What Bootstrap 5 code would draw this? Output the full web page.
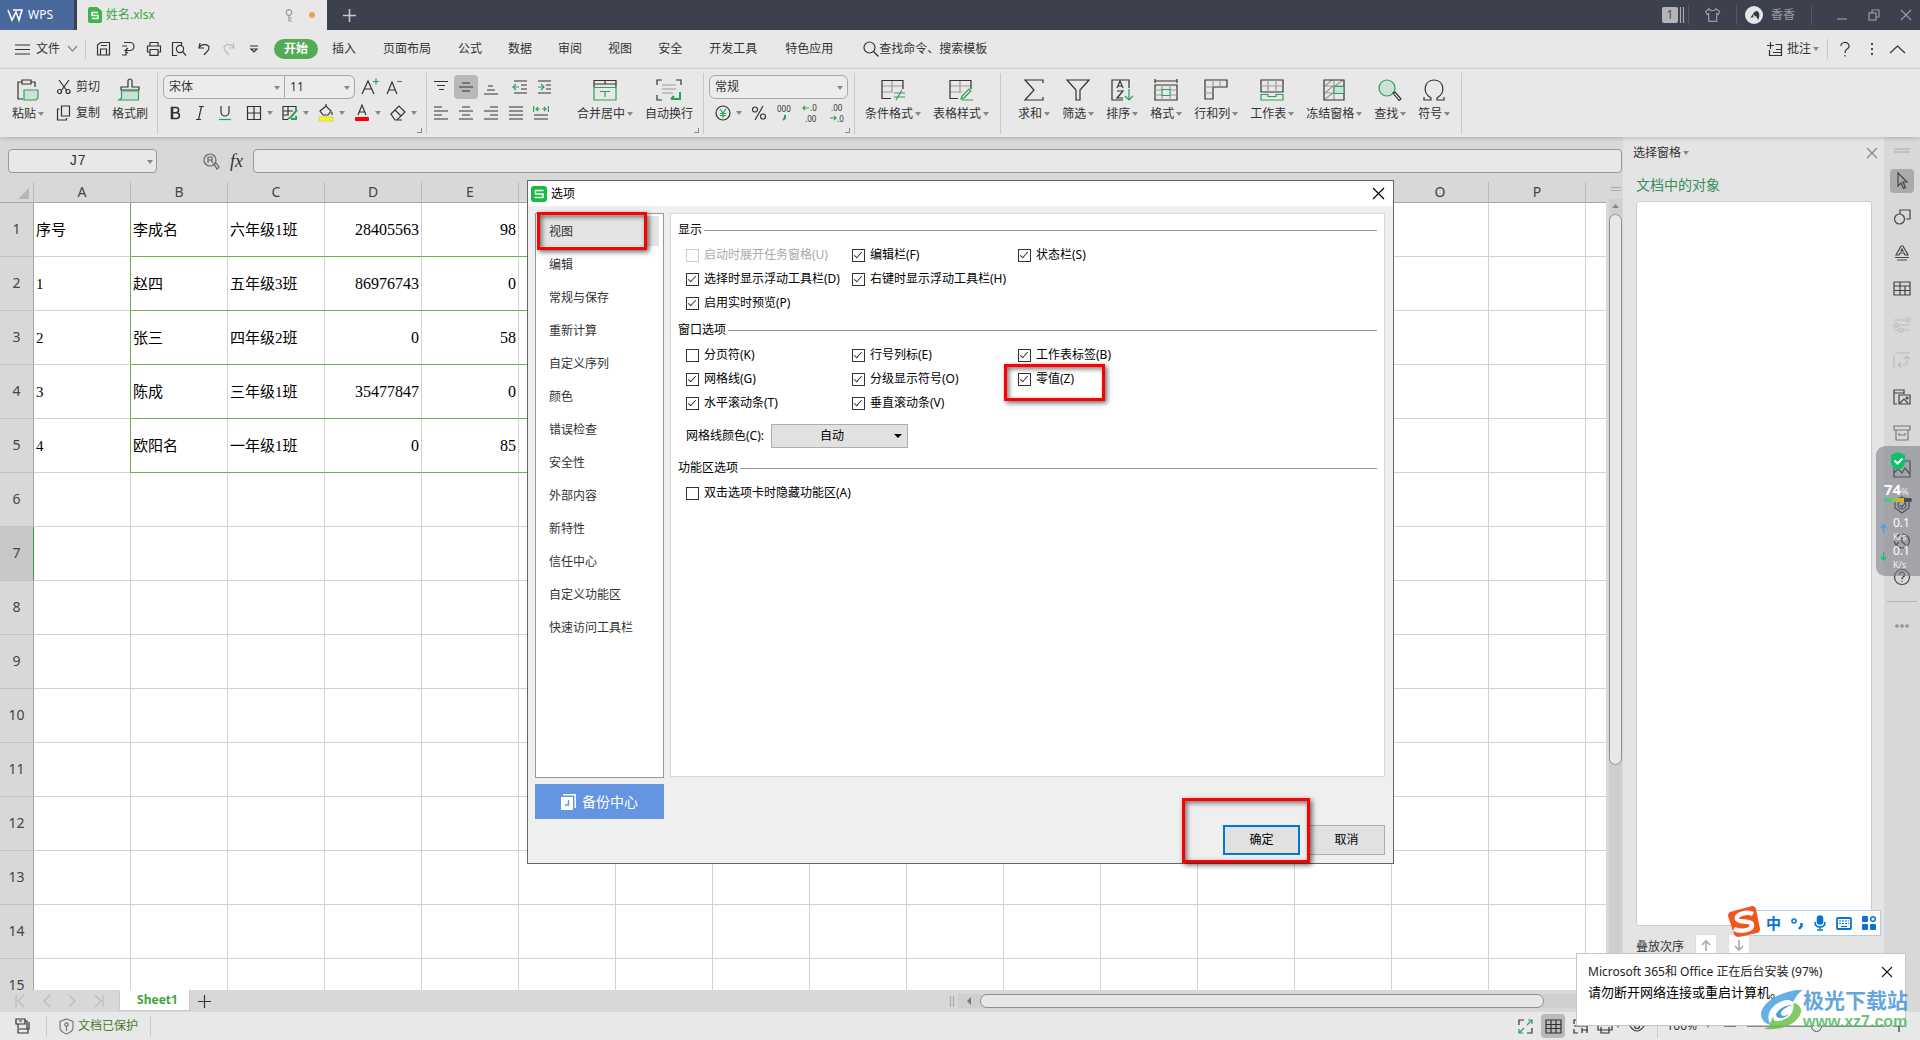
<!DOCTYPE html>
<html lang="zh-CN">
<head>
<meta charset="utf-8">
<meta name="viewport" content="width=device-width, initial-scale=1">
<title>姓名.xlsx - WPS</title>
<link rel="stylesheet" href="https://cdn.jsdelivr.net/npm/bootstrap@5.3.0/dist/css/bootstrap.min.css">
<style>
:root{--ink:#333;--green:#2e9f5b;--bar:#e8e8e8;--mid:#d8d8d8}
body{font-family:"Noto Sans","Noto Sans CJK SC",sans-serif;font-size:12px;line-height:18px;color:var(--ink);background:var(--mid)}
button,input,select{font:inherit;color:inherit}
button{background:none;border:0;padding:0;white-space:nowrap}
a{color:inherit;text-decoration:none}
svg{display:block;flex:none;fill:none;stroke:currentColor;stroke-width:1.2;overflow:visible}
svg.ns{stroke:none} svg.w2{stroke-width:1.6} svg.w3{stroke-width:2.4}
svg .g{stroke:var(--green)} svg .gf{fill:#cfe0d7;stroke:var(--green)} svg .s{stroke:#999}
svg text{stroke:none;fill:currentColor;font-size:8px}
.caret{width:0;height:0;border:3px solid transparent;border-top:4px solid #888;border-bottom:0;flex:none;margin-left:2px}
.g3{gap:3px}
/* title bar */
.titlebar{height:30px;background:#3d404d;color:#999ba4}
.home-btn{width:74px;background:#49689c;color:#fff;gap:5px;padding-left:7px}
.doc-tab{width:250px;margin-left:3px;background:var(--bar);color:#3fa544;padding:0 12px 0 11px}
.tsep{width:1px;height:20px;background:#555966}
.dot{width:6px;height:6px;border-radius:50%;background:#e8a15e}
.count{width:16px;height:16px;background:#b4b5ba;color:#5a4a3a;border-radius:2px;line-height:16px}
.avatar{width:18px;height:18px}
/* menu */
.menubar{height:39px;background:var(--bar);border-bottom:1px solid var(--mid);padding-left:15px}
.file-link{margin:0 8px 0 6px}
.vsep{width:1px;background:#c9c9c9}
.tab-link{padding:0 13px}.tab-wide{padding:0 14px}
.tab-on{background:#54ab55;color:#fff;font-weight:700;border-radius:10px;padding:1px 10px;margin:0 1px 0 12px}
/* ribbon */
.ribbon{height:68px;background:var(--bar);box-shadow:0 1px 4px #0003;z-index:1;position:relative}
.rgroup{position:relative;display:flex;gap:12px}
.rgroup::after{content:"";position:absolute;right:0;top:4px;bottom:3px;width:1px;background:#c9c9c9}
.launch::before{content:"";position:absolute;right:5px;bottom:4px;width:5px;height:5px;border:solid #888;border-width:0 1px 1px 0}
.big{display:flex;flex-direction:column;align-items:center;gap:4px;padding-top:10px}
.two{display:flex;flex-direction:column;gap:2px;padding-top:6px}
.two>div{height:24px;display:flex;align-items:center}
.sq{width:24px;height:24px;display:flex;align-items:center;justify-content:center;border-radius:4px}
.sq.on{background:#b9b9b9}
.pick{position:relative;border:1px solid #a9a9a9;height:24px;background:#ececec}
.pick::after,.grid-color::after{content:"";position:absolute;right:4px;top:10px;border:3px solid transparent;border-top:4px solid #888;border-bottom:0;pointer-events:none}
.pick select,.grid-color select{appearance:none;border:0;background:none;width:100%;height:100%;padding:0 5px;outline:0}
/* sheet */
.fbar{height:45px;padding:12px 1px 9px 8px}
.fbox{height:24px;border:1px solid #999;border-radius:4px;background:var(--bar);outline:0}
.namebox{position:relative;width:149px}
.namebox input{width:100%;padding-right:12px;font:14px "Liberation Mono",monospace;background:none;border:0;outline:0;height:22px}
.namebox .caret{position:absolute;right:3px;top:10px}
.fx{font:italic 18px/20px "Liberation Serif",serif;margin-right:10px}
.sheet{table-layout:fixed;width:1683px;border-collapse:separate;border-spacing:0;background:#fff}
.sheet th{font-weight:400;font-size:14px;color:#444;background:var(--mid);text-align:center;padding:0}
.sheet thead th{height:21px;line-height:20px;border-bottom:1px solid #a5a5a5;border-right:1px solid #bbb}
.sheet tbody th{border-right:1px solid #a5a5a5;border-bottom:1px solid #c2c2c2;padding-bottom:2px}
.sheet tbody .cur{background:#c8c8c8;border-right:1px solid #3d9a50}
.sheet td{height:54px;padding:1px 2px 0;border-right:1px solid #d2d2d2;border-bottom:1px solid #d2d2d2;color:#000;font:15px/22px "Liberation Serif","Noto Sans CJK SC",serif;white-space:nowrap}
.sheet .num{font-size:16px;text-align:right}
.sheet .gb{border-bottom-color:#70ad47}.sheet .gr{border-right-color:#70ad47}
.corner{width:0;height:0;border:solid transparent;border-width:0 0 11px 11px;border-bottom-color:#b5b5b5;margin:3px 4px 0 auto}
.vscroll{width:17px;padding:4px 1px 0 3px}
.vthumb,.hthumb{border:1px solid #8f8f8f;background:var(--bar);border-radius:7px}
.vtrack{background:#cfcfcf}
.vthumb{height:70%;margin-top:5px}
.tabs{height:22px}
.sheet-tab{width:71px;height:21px;background:#fff;border:1px solid #ccc;border-top:0;color:#3fa544;font-weight:700;margin-left:15px;padding-left:6px}
.htrack{flex:0 0 41%;height:14px;background:#cfcfcf;padding:0 79px 0 8px}
.hthumb{margin-left:8px}
/* right pane */
.pane{width:261px;background:#e4e4e4;padding:7px 7px 0 10px}
.pane-head{font-size:14px;line-height:20px;color:#348f5a;margin:13px 0 6px 3px}
.objlist{background:#fff;border:1px solid #ccc;border-radius:3px;margin:0 5px 0 3px}
.order{height:86px;padding:8px 0 0 3px;gap:11px}
.mv{width:22px;height:22px;background:#fff;border:1px solid #ddd;border-radius:2px;display:flex;align-items:center;justify-content:center;color:#aaa}
.strip{width:36px;color:#444;padding-top:11px}
.strip button{width:24px;height:24px;margin-bottom:12px;display:flex;align-items:center;justify-content:center;border-radius:4px}
.strip .on{background:#aaa}
.strip .off{color:#bcbcbc}
.strip hr{width:30px;margin:0 0 22px}
.statusbar{height:28px;background:var(--bar)}
.zoomer{appearance:none;width:138px;height:12px;background:linear-gradient(#888,#888) center/100% 1px no-repeat}
.zoomer::-webkit-slider-thumb{appearance:none;width:11px;height:11px;border:1px solid #555;border-radius:50%;background:var(--bar)}
/* options window */
.dlg{position:absolute;left:527px;top:180px;width:867px;background:#efefef;border:1px solid #666;color:#000;z-index:3}
.dlg-title{height:25px;background:#fff;padding:0 9px 0 3px}
.dlg-body{padding:7px 8px 8px 7px;gap:6px}
.side{width:129px}
.side-list{height:565px;background:#fff;border:1px solid #999;padding:1px 4px 0 1px;color:var(--ink)}
.side-list a{display:block;height:33px;line-height:33px;padding-left:12px}
.side-list .on{background:linear-gradient(#e4e4e4,#e4e4e4) 0 1px/100% 30px no-repeat}
.backup{height:35px;margin-top:6px;background:#6495e1;color:#fff;font-size:14px;gap:6px}
.panel{height:564px;background:#fff;border:1px solid #d8d8d8;padding:7px 7px 0}
.sect{display:flex;align-items:center;gap:2px;font-size:12px;margin:0;float:none;line-height:18px}
.sect::after{content:"";flex:1;height:1px;background:#999}
.opts{display:grid;grid-template-columns:166px 166px 1fr;padding:4px 0 6px 8px}
.opts label{display:flex;align-items:center;gap:5px;height:24px;white-space:nowrap}
.opts .dim{color:#aaa}
.opts input{appearance:none;width:13px;height:13px;border:1px solid #333;margin:0;position:relative;background:#fff}
.opts .dim input{border-color:#ccc}
.opts input:checked::before{content:"";position:absolute;left:3px;top:0;width:4px;height:8px;border:solid #333;border-width:0 1px 1px 0;transform:rotate(42deg)}
.color-row{padding:3px 0 11px 8px}
.color-row label{width:85px}
.grid-color{position:relative;width:137px;height:24px;background:#e1e1e1;border:1px solid #adadad}
.grid-color::after{border-width:4px 4px 0;border-top-color:#000;right:5px;top:9px}
.grid-color select{text-align:center;text-align-last:center;padding-right:20px}
.dlg-foot{gap:8px;margin-top:48px}
.dbtn{width:77px;height:30px;background:#e1e1e1;border:1px solid #adadad}
.dbtn.main{border:2px solid #0078d7}
.hl{position:absolute;border:3px solid #f00;box-shadow:2px 2px 5px #0009,inset 2px 2px 5px #0008;pointer-events:none}
.hl-nav{left:9px;top:31px;width:110px;height:38px}
.hl-zero{left:476px;top:183px;width:101px;height:37px}
.hl-ok{left:654px;top:617px;width:128px;height:65px}
/* floating windows */
.meter{position:absolute;right:0;top:446px;width:44px;height:130px;background:#7d808996;border-radius:9px 0 0 9px;color:#fff;z-index:3;padding-top:6px}
.meter .shield{margin-left:14px}
.meter .load{padding:10px 0 0 8px}
.meter .rate{padding-left:5px;gap:7px;line-height:17px}
.meter .unit{font-size:9px;line-height:11px;color:#eee}
.meter b{font:700 15px/18px "Open Sans",sans-serif}
.up{color:#1fa7ff}.down{color:#0fc06a}
.gauge{width:28px;height:4px;margin:0 0 12px 8px;border-radius:2px;background:linear-gradient(90deg,#2cc1b5,#8fc94a 40%,#f0ab1c 70%,#4a4c55 71%)}
.ime{position:absolute;right:39px;bottom:104px;width:146px;height:26px;background:#fff;border:1px solid #b5cbe8;color:#0873d6;z-index:3;padding:0 4px 0 30px}
.ime b{font-size:15px}
.ime .logo{position:absolute;left:-9px;top:-6px}
.toast-box{position:absolute;right:14px;bottom:14px;width:330px;height:73px;background:#fff;border:1px solid #c5c5c5;color:#222;z-index:3;padding:8px 8px 8px 11px}
.toast-box p{margin:0;line-height:20px}.toast-box .big-line{font-size:13px;color:#000}
.wm{position:absolute;right:12px;bottom:9px;z-index:4;pointer-events:none;opacity:.85}
.wm b{display:block;font-size:21px;line-height:25px;color:#4a97d8}
.wm i{display:block;font:700 16px/18px "Liberation Sans",sans-serif;color:#51b862}
</style>
</head>
<body class="vh-100 d-flex flex-column overflow-hidden position-relative">

<header class="titlebar d-flex align-items-center flex-shrink-0">
  <button class="home-btn d-flex align-items-center h-100"><svg class="w2" width="16" height="12" viewBox="0 0 16 12"><path d="M1 1l4 10 4-8 3 8 3-10H6"/></svg>WPS</button>
  <div class="doc-tab d-flex align-items-center h-100">
    <svg width="14" height="16" viewBox="0 0 14 16"><path d="M2 0h7l5 4v10a2 2 0 0 1-2 2H2a2 2 0 0 1-2-2V2a2 2 0 0 1 2-2z" fill="#3db54a" stroke="none"/><path d="M10 5.500H4v3h6v3H4" stroke="#fff" stroke-width="1.500"/></svg>
    <span class="ms-1">姓名.xlsx</span>
    <svg class="ms-auto me-3" width="8" height="13" viewBox="0 0 8 13" color="#999"><circle cx="4" cy="3.500" r="2.800"/><path d="M4 6v6.500M4 9h3M4 12h3"/></svg><span class="dot"></span>
  </div>
  <button class="ms-3" aria-label="新建"><svg class="w2" width="13" height="13" color="#c6c7cb"><path d="M6.500 0v13M0 6.500h13"/></svg></button>
  <div class="ms-auto d-flex align-items-center pe-2">
    <span class="count text-center">1</span><svg width="6" height="16" color="#aaa"><path d="M2.500 0v16M5.500 0v16"/></svg><span class="tsep ms-1"></span>
    <svg class="mx-3" width="15" height="14" viewBox="0 0 15 14"><path d="M4 .7L.7 3.500l1.500 3 1.500-1v7.800h8V5.500l1.500 1 1.500-3L11 .7 9.500 2.500h-4z"/></svg><span class="tsep"></span>
    <svg class="avatar ns mx-2" viewBox="0 0 18 18"><circle cx="9" cy="9" r="9" fill="#dfe9ec"/><path d="M5 12c2-1 3-7 7-7 3 1 3 6 1 9l-2-4-2 1z" fill="#3b3437"/><path d="M8 8l3 3-3 1z" fill="#e9b5a5"/></svg>
    <span>香香</span><span class="tsep mx-3"></span>
    <button class="px-2 me-1" aria-label="最小化"><svg width="12" height="12"><path d="M1 10h10"/></svg></button>
    <button class="px-2 me-1" aria-label="还原"><svg width="12" height="12"><rect x="1" y="4" width="7" height="7"/><path d="M4 4V1h7v7H8"/></svg></button>
    <button class="ps-2" aria-label="关闭"><svg width="12" height="12"><path d="M1 1l10 10M11 1L1 11"/></svg></button>
  </div>
</header>

<nav class="menubar d-flex align-items-center flex-shrink-0">
  <svg width="15" height="11"><path d="M0 1h15M0 5.500h15M0 10h15"/></svg>
  <a href="#" class="file-link">文件</a>
  <svg width="9" height="6" color="#888"><path d="M0 0l4.500 5L9 0"/></svg>
  <span class="vsep h-50 ms-2"></span>
  <div class="d-flex align-items-center" style="gap:9px;margin-left:10px">
    <button aria-label="保存"><svg width="16" height="16"><path d="M1.500 14V4l3-2.500h9V14zM4.500 14V8h6v6M5 4.500h6"/></svg></button>
    <button aria-label="输出"><svg width="16" height="16"><path d="M3 1.500h6a4 4 0 0 1 0 8H5M7 7L4 9.500 7 12M1 5h5M1 14h4V9"/></svg></button>
    <button aria-label="打印"><svg width="16" height="16"><path d="M4 5V1.500h8V5M4 11H1.500V5h13v6H12M4 8.500h8v5.800H4z"/></svg></button>
    <button aria-label="打印预览"><svg width="16" height="16"><path d="M6 14.500H1.500v-13h9V4"/><circle cx="9" cy="8" r="3.600"/><path d="M11.500 10.500l3.500 4"/></svg></button>
    <button aria-label="撤销"><svg width="16" height="16"><path d="M4 2L3 7h5M3 7c2-5 10-4 10 0 0 3-3 4-5 7"/></svg></button>
    <button aria-label="恢复"><svg width="16" height="16" color="#bbb"><path d="M12 2l1 5H8M13 7C11 2 3 3 3 7c0 3 3 4 5 7"/></svg></button>
    <button aria-label="自定义"><svg width="16" height="16"><path d="M4 5h8M5 8l3 3 3-3z"/></svg></button>
  </div>
  <a href="#" class="tab-on">开始</a>
  <a href="#" class="tab-link">插入</a><a href="#" class="tab-wide">页面布局</a><a href="#" class="tab-link">公式</a><a href="#" class="tab-link">数据</a><a href="#" class="tab-link">审阅</a><a href="#" class="tab-link">视图</a><a href="#" class="tab-link">安全</a><a href="#" class="tab-wide">开发工具</a><a href="#" class="tab-wide">特色应用</a>
  <button class="d-flex align-items-center ms-3"><svg width="16" height="16"><circle cx="6.500" cy="6.500" r="5.500"/><path d="M10.500 10.500l5 5"/></svg>查找命令、搜索模板</button>
  <div class="ms-auto d-flex align-items-center" style="padding-right:15px">
    <button class="d-flex align-items-center me-2"><svg class="me-1" width="16" height="15"><path d="M3.500 0v7M0 3.500h7M8.500 2.500h6v11h-12V8M6 10.500h8M9 7.500h5"/></svg>批注<span class="caret"></span></button>
    <span class="vsep h-100" style="min-height:20px"></span>
    <button class="ms-2 px-1" aria-label="帮助"><svg width="10" height="15"><path d="M1 4a4 3.500 0 1 1 6 3C5.500 8 5 9 5 11M5 13v1.500"/></svg></button>
    <button class="px-3" aria-label="更多"><svg class="ns" width="4" height="14"><path d="M1 1h2v2H1zM1 6h2v2H1zM1 11h2v2H1z" fill="#444"/></svg></button>
    <button aria-label="折叠功能区"><svg width="15" height="9"><path d="M0 8l7.500-7L15 8"/></svg></button>
  </div>
</nav>

<section class="ribbon d-flex flex-shrink-0">
  <div class="rgroup" style="padding:0 10px 0 12px">
    <button class="big"><svg width="24" height="22"><path d="M6 3H2v17h5M15 3h4v5M6 1h9v4H6z"/><path class="gf" d="M8 11h14v8l-2 2H8z"/></svg><span class="d-flex align-items-center">粘贴<span class="caret"></span></span></button>
    <div class="two"><div><button class="d-flex align-items-center gap-1"><svg width="16" height="16"><path d="M3 1l8 11M13 1L5 12"/><circle cx="3.500" cy="12.500" r="2"/><circle cx="12" cy="12.500" r="2"/></svg>剪切</button></div><div><button class="d-flex align-items-center gap-1"><svg width="16" height="16"><path d="M5.500 1h8v10h-8zM3.500 4H1.500v11h9v-2"/></svg>复制</button></div></div>
    <button class="big"><svg width="22" height="22"><path d="M2 11h18V8h-7V2a2 2 0 0 0-4 0v6H2z"/><path class="gf" d="M2.500 12h17v9H0l2.500-2z"/></svg>格式刷</button>
  </div>
  <div class="rgroup launch" style="padding:0 10px 0 5px">
    <div class="two">
      <div><label class="pick rounded-start" style="width:122px"><select aria-label="字体"><option>宋体</option></select></label><label class="pick rounded-end border-start-0" style="width:70px"><select aria-label="字号"><option>11</option></select></label>
        <button class="sq" aria-label="增大字号" style="margin-left:3px"><svg width="18" height="18"><path d="M1 16L7 3l6 13M3.500 11h7"/><path class="g" d="M12 3.500h6M15 .5v6"/></svg></button><button class="sq" aria-label="减小字号"><svg width="18" height="18"><path d="M2 16L7 4l5 12M4 12h6"/><path class="g" d="M12 3.500h5"/></svg></button></div>
      <div style="gap:9px;padding-left:4px">
        <button aria-label="加粗"><svg class="w2" width="16" height="16"><path d="M4.500 2.500H9a2.600 2.600 0 0 1 0 5.200H4.500zM4.500 7.700h5a2.900 2.900 0 0 1 0 5.800h-5zM5.500 2.500v11"/></svg></button>
        <button aria-label="倾斜"><svg width="16" height="16"><path d="M7 1.500h5M4 14.500h5M9.500 1.500l-3 13"/></svg></button>
        <button aria-label="下划线"><svg width="16" height="16"><path d="M4 1v6a4 4 0 0 0 8 0V1"/><path class="g" d="M2 14.500h12"/></svg></button>
        <button class="d-flex align-items-center g3 ms-1" aria-label="边框"><svg width="16" height="16"><path d="M1.500 1.500h13v13h-13zM8 1.500v13M1.500 8h13"/></svg><span class="caret"></span></button>
        <button class="d-flex align-items-center g3" aria-label="绘图边框"><svg width="16" height="16"><path d="M14 5V1.500H1v13h5M1 6h10M1 10h6M6 1.500V10"/><path class="g" stroke-width="2" d="M15 5l-6 7-3 2M9 14h5v-3"/></svg><span class="caret"></span></button>
        <button class="d-flex align-items-center g3" aria-label="填充颜色"><svg width="16" height="18"><path d="M2 7l6-5 5 5-3 4H5zM8 2V0M14 8v3"/><rect x="1" y="13" width="14" height="4" fill="#ff0" stroke="#aaa" stroke-width=".5"/></svg><span class="caret"></span></button>
        <button class="d-flex align-items-center g3" aria-label="字体颜色"><svg width="16" height="18"><path d="M4 11L8 1l4 10M5.500 8h5"/><rect x="1" y="13" width="14" height="4" rx="1" fill="red" stroke="none"/></svg><span class="caret"></span></button>
        <button class="d-flex align-items-center g3" aria-label="清除"><svg width="16" height="16"><path d="M1 9l8-8 6 6-8 8H5zM5 5l6 6M7 15h5"/></svg><span class="caret"></span></button>
      </div>
    </div>
  </div>
  <div class="rgroup launch" style="padding:0 11px 0 2px">
    <div class="two" style="margin-right:8px">
      <div style="gap:1px"><button class="sq" aria-label="顶端对齐"><svg width="16" height="16"><path d="M1 2.500h14M4 6.500h8M6 10.500h5"/></svg></button><button class="sq on" aria-label="垂直居中"><svg width="16" height="16"><path d="M4 4h8M1 8h14M4 12h8"/></svg></button><button class="sq" aria-label="底端对齐"><svg width="16" height="16"><path d="M5 7h5M4 11h8M1 15h14"/></svg></button><button class="sq ms-1" aria-label="减少缩进"><svg width="16" height="16"><path d="M2 2h13M9 6h6M9 10h6M2 14h13"/><path class="g" d="M7 8H1M4 5L1 8l3 3"/></svg></button><button class="sq" aria-label="增加缩进"><svg width="16" height="16"><path d="M1 2h13M9 6h5M9 10h5M1 14h13"/><path class="g" d="M1 8h6M4 5l3 3-3 3"/></svg></button></div>
      <div style="gap:1px"><button class="sq" aria-label="左对齐"><svg width="16" height="16"><path d="M1 2h8M1 6h14M1 10h8M1 14h14"/></svg></button><button class="sq" aria-label="居中"><svg width="16" height="16"><path d="M4 2h8M1 6h14M4 10h8M1 14h14"/></svg></button><button class="sq" aria-label="右对齐"><svg width="16" height="16"><path d="M7 2h8M1 6h14M7 10h8M1 14h14"/></svg></button><button class="sq" aria-label="两端对齐"><svg width="16" height="16"><path d="M1 2h14M1 6h14M1 10h14M1 14h14"/></svg></button><button class="sq" aria-label="分散对齐"><svg width="16" height="16"><path d="M1 10h14M1 14h14"/><path class="g" d="M.6 1v6M15.400 1v6M3 4h4M9 4h4M5 2L3 4l2 2M11 2l2 2-2 2"/></svg></button></div>
    </div>
    <button class="big"><svg width="24" height="22"><path d="M1 8V1.500h22V8M1 5h22M12 1.500V5"/><path class="g" d="M1 8.500h22V21H1zM7 12.500h10M12 12.500V18"/></svg><span class="d-flex align-items-center">合并居中<span class="caret"></span></span></button>
    <button class="big"><svg width="26" height="22"><path d="M6 1H1v5M20 1h5v5M1 16v5h5"/><path class="s" d="M6 6h14M6 10h14M6 14h11"/><path class="g" stroke-width="2" d="M24 13v7h-9M18 17l-3 3"/></svg>自动换行</button>
  </div>
  <div class="rgroup launch" style="padding:0 7px 0 5px">
    <div class="two">
      <div><label class="pick rounded" style="width:139px"><select aria-label="数字格式"><option>常规</option></select></label></div>
      <div style="gap:9px;padding-left:6px">
        <button class="d-flex align-items-center g3" aria-label="货币"><svg width="16" height="16"><circle cx="8" cy="8" r="7"/><path class="g" d="M5 4l3 4 3-4M8 8v5M5 8.500h6M5 10.500h6"/></svg><span class="caret"></span></button>
        <button aria-label="百分比"><svg width="16" height="16"><circle cx="4" cy="4.500" r="2.500"/><circle cx="12" cy="11.500" r="2.500"/><path d="M12 1L4 15"/></svg></button>
        <button aria-label="千位分隔"><svg width="16" height="20"><text x="1" y="9">000</text><path class="g" stroke-width="2" d="M9 12v3l-2 2"/></svg></button>
        <button aria-label="增加小数位"><svg width="18" height="20"><text x="9" y="8">.0</text><text x="4" y="19">.00</text><path class="g" d="M8 5H2M4 3L2 5l2 2"/></svg></button>
        <button aria-label="减少小数位"><svg width="18" height="20"><text x="3" y="8">.00</text><text x="9" y="19">.0</text><path class="g" d="M2 15h6M6 13l2 2-2 2"/></svg></button>
      </div>
    </div>
  </div>
  <div class="rgroup" style="padding:0 12px 0 10px">
    <button class="big"><svg width="24" height="22"><path class="s" d="M1 7h21M1 13h11M11 1v12"/><path d="M10 19.500H1v-18h21V10"/><path class="g" d="M13 14h11M13 18h11M21 11l-6 10"/></svg><span class="d-flex align-items-center">条件格式<span class="caret"></span></span></button>
    <button class="big"><svg width="24" height="22"><path class="s" d="M1 7h21M1 13h12M11 1v12"/><path d="M9 19.500H1v-18h21V10"/><path class="gf" d="M22 12l-7 7-3 1 1-3 7-7zM13 21h11"/></svg><span class="d-flex align-items-center">表格样式<span class="caret"></span></span></button>
  </div>
  <div class="rgroup" style="padding:0 12px 0 17px">
    <button class="big"><svg width="20" height="22"><path d="M19 4V1H1l9 10L1 21h18v-3"/></svg><span class="d-flex align-items-center">求和<span class="caret"></span></span></button>
    <button class="big"><svg width="24" height="22"><path d="M1 1h22l-9 10v10h-4V11z"/></svg><span class="d-flex align-items-center">筛选<span class="caret"></span></span></button>
    <button class="big"><svg width="24" height="22"><path d="M13 21H2V1h17v8M7 9l3-7 3 7M8 7h4M7 12h6l-6 7h6"/><path class="g" d="M19 10v11M15 17l4 4 4-4"/></svg><span class="d-flex align-items-center">排序<span class="caret"></span></span></button>
    <button class="big"><svg width="24" height="22"><path d="M1 0v4M23 0v4M1 2h22M1 6h22v15H1z"/><path class="s" d="M1 11h7M16 11h7M1 16h7M16 16h7M8 6v4M16 6v4M8 17v4M16 17v4"/><path class="g" d="M8 10.500h8v6H8z"/></svg><span class="d-flex align-items-center">格式<span class="caret"></span></span></button>
    <button class="big"><svg width="24" height="22"><path d="M1 1h22v7H9v12H1z"/><path class="s" d="M9 1v7M16 1v7M1 8h8M1 14h8"/></svg><span class="d-flex align-items-center">行和列<span class="caret"></span></span></button>
    <button class="big"><svg width="24" height="22"><path d="M1 13V1h22v12z"/><path class="s" d="M8 1v12M16 1v12M1 7h22"/><path class="g" d="M1 15.500h7v2h8v-2h7V21H1z"/></svg><span class="d-flex align-items-center">工作表<span class="caret"></span></span></button>
    <button class="big"><svg width="22" height="22"><path class="s" d="M1 7h20M1 14h20M11 1v20M2 7l7-6M2 14l8-7M2 20l8-6M12 7l8-6"/><path d="M1 1h20v20H1z"/><path class="gf" d="M11 7.500h10v7H11z"/></svg><span class="d-flex align-items-center">冻结窗格<span class="caret"></span></span></button>
    <button class="big"><svg width="24" height="22"><circle class="gf" cx="9" cy="9" r="8"/><path d="M15 14l2-1 6 7-2 1.500z"/></svg><span class="d-flex align-items-center">查找<span class="caret"></span></span></button>
    <button class="big"><svg width="22" height="22"><path d="M1 18v3h7v-2C-2 13 2 1 11 1s13 12 3 18v2h7v-3"/></svg><span class="d-flex align-items-center">符号<span class="caret"></span></span></button>
  </div>
</section>

<main class="d-flex flex-grow-1" style="min-height:0">
  <div class="d-flex flex-column flex-grow-1" style="min-width:0">
    <div class="fbar d-flex align-items-center">
      <div class="namebox fbox"><input class="text-center" value="J7" aria-label="名称框"><span class="caret"></span></div>
      <svg style="margin:0 10px 0 46px" width="17" height="17" color="#666"><circle cx="7" cy="7" r="6"/><path d="M11 11l2-1 3 4-2 2zM5 10V4h4v3H5M8 7l2 3"/></svg>
      <i class="fx">fx</i>
      <input class="fbox flex-grow-1 px-2" aria-label="编辑栏">
    </div>
    <div class="d-flex flex-grow-1" style="min-height:0">
      <div class="flex-grow-1 overflow-hidden" style="min-width:0"><table class="sheet"><thead></thead><tbody></tbody></table></div>
      <div class="vscroll d-flex flex-column align-items-center flex-shrink-0">
        <svg width="10" height="13" color="#aaa"><path d="M0 1.500h10M0 4.500h10"/></svg>
        <div class="vtrack w-100 flex-grow-1 pt-1"><svg class="mx-auto ns" width="7" height="6"><path d="M0 5l3.500-4L7 5z" fill="#888"/></svg><div class="vthumb"></div></div>
      </div>
    </div>
    <div class="tabs d-flex align-items-center flex-shrink-0">
      <div class="d-flex align-items-center" style="gap:17px;padding-left:15px;color:#bbb">
        <svg width="10" height="12"><path d="M1 0v12M9 0L3 6l6 6"/></svg><svg width="9" height="12"><path d="M8 0L2 6l6 6"/></svg><svg width="9" height="12"><path d="M1 0l6 6-6 6"/></svg><svg width="10" height="12"><path d="M9 0v12M1 0l6 6-6 6"/></svg>
      </div>
      <button class="sheet-tab align-self-start">Sheet1</button>
      <button class="ms-2" aria-label="新建工作表"><svg width="13" height="13"><path d="M6.500 0v13M0 6.500h13"/></svg></button>
      <svg class="ms-auto me-1" width="4" height="11" color="#aaa"><path d="M.5 0v11M3.500 0v11"/></svg>
      <div class="htrack d-flex align-items-center"><svg class="ns" width="6" height="8"><path d="M5 0v8L1 4z" fill="#777"/></svg><div class="hthumb flex-grow-1 h-100"></div></div>
    </div>
  </div>

  <aside class="pane d-flex flex-column flex-shrink-0">
    <div class="d-flex align-items-center"><span>选择窗格</span><span class="caret"></span><button class="ms-auto" aria-label="关闭窗格"><svg width="10" height="10" color="#888"><path d="M0 0l10 10M10 0L0 10"/></svg></button></div>
    <div class="pane-head">文档中的对象</div>
    <div class="objlist flex-grow-1"></div>
    <div class="order d-flex align-items-start"><span class="pt-1">叠放次序</span><button class="mv" aria-label="上移"><svg class="w2" width="10" height="11"><path d="M5 11V1M1 5l4-4 4 4"/></svg></button><button class="mv" aria-label="下移"><svg class="w2" width="10" height="11"><path d="M5 0v10M1 6l4 4 4-4"/></svg></button></div>
  </aside>

  <aside class="strip d-flex flex-column align-items-center flex-shrink-0">
    <svg class="mb-3 flex-shrink-0" width="16" height="5" color="#aaa"><path d="M0 1h16M0 4h16"/></svg>
    <button class="on" aria-label="选择"><svg width="16" height="18"><path d="M4 1l9 9H9l2.500 5.500-2 1L7 11l-3 3z"/></svg></button>
    <button aria-label="形状"><svg width="18" height="18"><path d="M7 6V2h10v9h-4"/><circle cx="6.500" cy="11" r="5"/></svg></button>
    <button aria-label="艺术字"><svg width="18" height="18"><path d="M3 11L8 2h2l5 9h-3l-1-2H7l-1 2zM8 7l1-2 1 2zM2 13.500h14M4 16h10"/></svg></button>
    <button aria-label="表格"><svg width="18" height="16"><path d="M1 1h16v13H1zM1 5h16M1 9.500h16M7 1v13M12 5v9"/></svg></button>
    <button class="off" aria-label="属性"><svg width="18" height="16"><path d="M1 3h12M5 8h12M1 13h5M10 13h7"/><circle cx="15" cy="3" r="2"/><circle cx="3" cy="8" r="2"/><circle cx="8" cy="13" r="2"/></svg></button>
    <button class="off" aria-label="转置"><svg width="18" height="18"><path d="M4 1h13M1 4v13M5 13h6q3 0 3-3V5M8 10l-3 3 3 3M11 7l3-3 3 3"/></svg></button>
    <button aria-label="图库"><svg width="18" height="18"><path d="M4 16H1V2h10v4M1 5h10M6 7h11v9H6zM7 15l4-4 4 4"/><circle cx="14" cy="10" r="1"/></svg></button>
    <button aria-label="归档"><svg width="18" height="16" color="#777"><path d="M1 1h16v4H1zM3 5v10h12V5M6 8v2h6V8"/></svg></button>
    <button aria-label="图片"><svg width="18" height="18" color="#111"><path d="M1 1h16v16H1zM1 13l4-4 4 4 3-5 5 6"/></svg></button>
    <button aria-label="安全"><svg width="16" height="18" color="#111"><path d="M8 1l7 3v8l-7 5-7-5V4z"/><circle cx="8" cy="9" r="4"/><path d="M6 9l2 2 3-4"/></svg></button>
    <button aria-label="历史"><svg width="18" height="18" color="#111"><path d="M3 12a7 7 0 1 0 0-6M9 5v5l4 3M1 9l2 4 3-3"/></svg></button>
    <button aria-label="帮助"><svg width="18" height="18"><circle cx="9" cy="9" r="7.500"/><path d="M6.500 7a2.500 2.500 0 1 1 3.500 2Q9 10 9 11.500M9 13v1"/></svg></button>
    <hr>
    <svg width="14" height="4" color="#888"><circle cx="2" cy="2" r="1.200"/><circle cx="7" cy="2" r="1.200"/><circle cx="12" cy="2" r="1.200"/></svg>
  </aside>
</main>

<footer class="statusbar d-flex align-items-center flex-shrink-0">
  <svg style="margin:0 15px" width="16" height="16"><path d="M1 1h9v5H1zM10 3h2v8M14 4v7h-3M3 6v4M3 15v-4h10v4zM4 3h3"/></svg><span class="vsep h-75"></span>
  <svg style="margin:0 4px 0 12px" width="15" height="17" color="#777"><path d="M7.500 1l6.500 2.500v6q0 4-6.500 6.500Q1 13.500 1 9.500v-6z"/><circle cx="7.500" cy="6.500" r="1.700"/><path d="M7.500 8v5"/></svg><span class="me-2" style="color:#4c7a2f">文档已保护</span><span class="vsep h-75 ms-1"></span>
  <div class="ms-auto d-flex align-items-center" style="padding-right:15px">
    <svg width="15" height="15"><path d="M1 6V1h5M9 14h5V9"/><path class="g" d="M9 6l5-5M10 1h4v4M6 9l-5 5M1 10v4h4"/></svg>
    <button class="sq on mx-2" aria-label="普通视图"><svg width="17" height="15"><path d="M1 1h15v13H1zM1 5.500h15M1 9.500h15M6 1v13M11 1v13"/></svg></button>
    <svg width="16" height="15"><path d="M1 5V1h4M11 1h3v6H1M14 7v7M9 9v5M1 10v4h4M9 11h6"/></svg>
    <svg class="ms-2" width="16" height="15"><path d="M4 4V1h8v3M1 4h14v7H1zM4 8v6h8V8"/></svg><span class="caret me-2"></span>
    <svg class="me-1" width="16" height="12"><path d="M1 6q7-10 14 0-7 10-14 0z"/><circle cx="8" cy="6" r="2.500"/></svg><span class="vsep mx-2 h-75" style="min-height:24px"></span>
    <span>100%</span><span class="caret ms-2"></span><svg style="margin:0 11px 0 13px" width="12" height="12"><path d="M0 6h12"/></svg>
    <input class="zoomer" type="range" value="50" aria-label="缩放"><svg class="ms-2" width="12" height="12"><path d="M0 6h12M6 0v12"/></svg>
  </div>
</footer>

<div class="dlg" role="dialog" aria-label="选项">
  <div class="dlg-title d-flex align-items-center"><svg class="me-1" width="16" height="16"><rect width="16" height="16" rx="3" fill="#16bd3c" stroke="none"/><path d="M12.500 4.500h-8v3.500h7.500v3.500h-8.500" stroke="#fff" stroke-width="1.500"/></svg><span>选项</span><button class="ms-auto" aria-label="关闭"><svg width="11" height="11" color="#000"><path d="M0 0l11 11M11 0L0 11"/></svg></button></div>
  <div class="dlg-body d-flex">
    <div class="side d-flex flex-column flex-shrink-0">
      <nav class="side-list"><a href="#" class="on">视图</a><a href="#">编辑</a><a href="#">常规与保存</a><a href="#">重新计算</a><a href="#">自定义序列</a><a href="#">颜色</a><a href="#">错误检查</a><a href="#">安全性</a><a href="#">外部内容</a><a href="#">新特性</a><a href="#">信任中心</a><a href="#">自定义功能区</a><a href="#">快速访问工具栏</a></nav>
      <button class="backup d-flex align-items-center justify-content-center"><svg class="ns" width="15" height="16"><path d="M2 0h13v14h-1.500V1.500H2zM0 3h12v13H0z" fill="#fff"/><path d="M7.500 6v5H4" stroke="#6495e1" stroke-width="1.500"/></svg>备份中心</button>
    </div>
    <div class="flex-grow-1">
      <div class="panel">
        <fieldset><legend class="sect">显示</legend><div class="opts">
          <label class="dim"><input type="checkbox" disabled>启动时展开任务窗格(U)</label><label><input type="checkbox" checked>编辑栏(F)</label><label><input type="checkbox" checked>状态栏(S)</label>
          <label><input type="checkbox" checked>选择时显示浮动工具栏(D)</label><label><input type="checkbox" checked>右键时显示浮动工具栏(H)</label><span></span>
          <label><input type="checkbox" checked>启用实时预览(P)</label></div></fieldset>
        <fieldset><legend class="sect">窗口选项</legend><div class="opts">
          <label><input type="checkbox">分页符(K)</label><label><input type="checkbox" checked>行号列标(E)</label><label><input type="checkbox" checked>工作表标签(B)</label>
          <label><input type="checkbox" checked>网格线(G)</label><label><input type="checkbox" checked>分级显示符号(O)</label><label><input type="checkbox" checked>零值(Z)</label>
          <label><input type="checkbox" checked>水平滚动条(T)</label><label><input type="checkbox" checked>垂直滚动条(V)</label></div>
          <div class="color-row d-flex align-items-center"><label for="gc">网格线颜色(C):</label><span class="grid-color"><select id="gc"><option>自动</option></select></span></div></fieldset>
        <fieldset><legend class="sect">功能区选项</legend><div class="opts"><label><input type="checkbox">双击选项卡时隐藏功能区(A)</label></div></fieldset>
      </div>
      <div class="dlg-foot d-flex justify-content-end"><button class="dbtn main">确定</button><button class="dbtn">取消</button></div>
    </div>
  </div>
  <div class="hl hl-nav"></div><div class="hl hl-zero"></div><div class="hl hl-ok"></div>
</div>

<div class="meter">
  <svg class="ns shield" width="16" height="18"><path d="M8 0l7 3v7q0 5-7 8-7-3-7-8V3z" fill="#0fc06a"/><path d="M4.500 8.500l3 3 5-5" stroke="#fff" stroke-width="2"/></svg>
  <div class="load d-flex align-items-baseline"><b>74</b><span class="unit">%</span></div>
  <div class="gauge"></div>
  <div class="rate d-flex align-items-center"><svg class="up" width="5" height="9"><path d="M2.500 9V1M0 4l2.500-3L5 4"/></svg><span><span class="d-block">0.1</span><span class="unit d-block">K/s</span></span></div>
  <div class="rate d-flex align-items-center"><svg class="down" width="5" height="9"><path d="M2.500 0v8M0 5l2.500 3L5 5"/></svg><span><span class="d-block">0.1</span><span class="unit d-block">K/s</span></span></div>
</div>

<div class="ime d-flex align-items-center justify-content-between">
  <svg class="logo" width="34" height="34" viewBox="0 0 34 34"><path d="M3 7l22-6q3 0 4 3l4 20q0 3-3 4L12 32q-4 0-5-3L1 11q0-3 2-4z" fill="#f1561f" stroke="none"/><path d="M26 9C20 6 9 9 10 14c1 4 15 1 15 6 0 6-12 7-18 4" stroke="#fff" stroke-width="4.500"/></svg>
  <b>中</b>
  <svg class="w2" width="13" height="14"><circle cx="3" cy="5" r="2"/><path stroke-width="2.500" d="M10.500 7v3L8 13"/></svg>
  <svg class="w2" width="12" height="16"><rect x="3.500" y="1" width="5" height="8" rx="2.500" fill="currentColor"/><path d="M1 7q0 5 5 5t5-5M6 12v2M3 15h6"/></svg>
  <svg width="16" height="13"><rect x="1" y="1" width="14" height="11" rx="1" stroke-width="1.800"/><path stroke-dasharray="2 1" d="M3 4h10M3 6.500h10"/><path d="M5 9.500h6"/></svg>
  <svg class="ns" width="14" height="14"><rect width="6" height="6" rx="1" fill="#0873d6"/><rect y="8" width="6" height="6" rx="1" fill="#0873d6"/><rect x="8" y="8" width="6" height="6" rx="1" fill="#0873d6"/><circle cx="11" cy="3" r="2.300" stroke="#0873d6" stroke-width="1.500"/></svg>
</div>

<div class="toast-box d-flex justify-content-between align-items-start">
  <div><p>Microsoft 365和 Office 正在后台安装 (97%)</p><p class="big-line">请勿断开网络连接或重启计算机。</p></div>
  <button class="p-1" aria-label="关闭通知"><svg width="11" height="11"><path d="M0 1l10 10M10 1L0 11"/></svg></button>
</div>
<div class="wm d-flex align-items-center">
  <svg class="ns" width="43" height="42" viewBox="0 0 43 42"><path d="M43 1C27 0 4 10 1 24c0 8 5 11 10 12-5-7-3-17 9-23 7-3 10-2 13 0C36 8 38 4 43 1z" fill="#4aa3e0"/><path d="M4 40c17 2 34-5 37-17 1-5-4-9-8-9 2 8-3 16-14 18-4 1-7-1-5-5-5 5-2 10-10 13z" fill="#6cc04a"/><path d="M16 25c4-7 11-9 17-9-5 1-11 4-12 8-1 3 4 4 8 1-4 5-13 6-13 0z" fill="#2f8fd0"/></svg>
  <div><b>极光下载站</b><i>www.xz7.com</i></div>
</div>

<script src="https://cdn.jsdelivr.net/npm/bootstrap@5.3.0/dist/js/bootstrap.bundle.min.js"></script>
<script>
const cols = 'ABCDEFGHIJKLMNOPQ'.split('');
const data = [
  ['序号','李成名','六年级1班','28405563','98'],
  ['1','赵四','五年级3班','86976743','0'],
  ['2','张三','四年级2班','0','58'],
  ['3','陈成','三年级1班','35477847','0'],
  ['4','欧阳名','一年级1班','0','85']
];
document.querySelector('.sheet thead').innerHTML =
  '<tr><th style="width:34px"><div class="corner"></div></th>' + cols.map(c => `<th>${c}</th>`).join('') + '</tr>';
let html = '';
for (let r = 1; r <= 15; r++) {
  html += `<tr><th${r === 7 ? ' class="cur"' : ''}>${r}</th>`;
  cols.forEach((c, i) => {
    const k = [];
    if (r <= 5 && i > 0 && i < 10) k.push('gb');
    if (r <= 5 && i === 0) k.push('gr');
    if (i > 2) k.push('num');
    html += `<td class="${k.join(' ')}">${(data[r - 1] || [])[i] || ''}</td>`;
  });
  html += '</tr>';
}
document.querySelector('.sheet tbody').innerHTML = html;
</script>
</body>
</html>
